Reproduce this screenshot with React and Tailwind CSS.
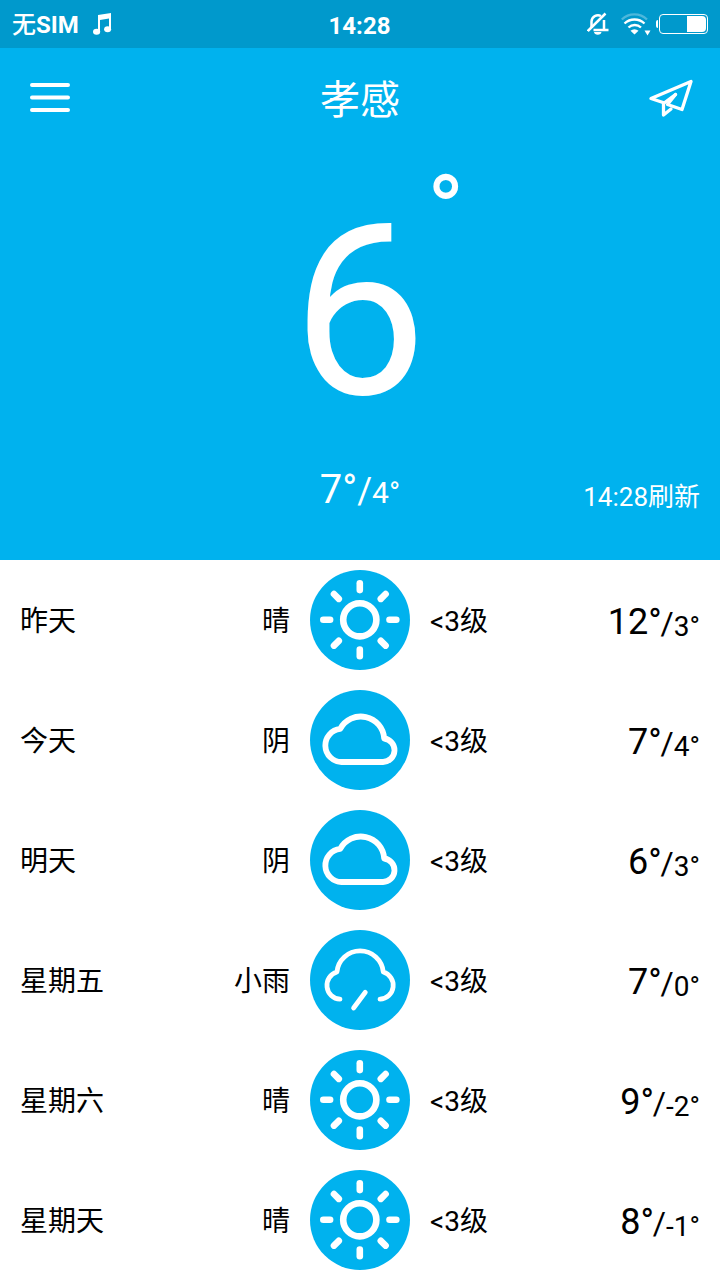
const forecast = [
  { day: "昨天", text: "晴", icon: "sun", wind: "<3级", high: 12, low: 3 },
  { day: "今天", text: "阴", icon: "cloud", wind: "<3级", high: 7, low: 4 },
  { day: "明天", text: "阴", icon: "cloud", wind: "<3级", high: 6, low: 3 },
  { day: "星期五", text: "小雨", icon: "rain", wind: "<3级", high: 7, low: 0 },
  { day: "星期六", text: "晴", icon: "sun", wind: "<3级", high: 9, low: -2 },
  { day: "星期天", text: "晴", icon: "sun", wind: "<3级", high: 8, low: -1 },
]

function WeatherIcon({ type }) {
  return (
    <svg viewBox="0 0 100 100" fill="none" stroke="#fff" strokeLinecap="round" className="w-[100px] h-[100px]">
      <circle cx="50" cy="50" r="50" fill="#00b2ee" stroke="none" />
      {type === "sun" && (
        <g strokeWidth="6.6">
          <circle cx="49.8" cy="49.8" r="16.6" />
          {[0, 45, 90, 135, 180, 225, 270, 315].map((a) => (
            <path key={a} d="M49.8 13.3v6.8" transform={`rotate(${a} 49.8 49.8)`} />
          ))}
        </g>
      )}
      {type === "cloud" && (
        <path
          strokeWidth="5.8"
          strokeLinejoin="round"
          d="M31.5 72A16.6 16.6 0 0 1 30.2 38.9A23.4 23.4 0 0 1 74.2 48.5A11.8 11.8 0 0 1 73 72Z"
        />
      )}
      {type === "rain" && (
        <g strokeWidth="4.8" strokeLinejoin="round">
          <path d="M30 69.2A13.9 13.9 0 0 1 26.9 42A23.3 23.3 0 0 1 73.3 42A13.9 13.9 0 0 1 70 69.2" />
          <path d="M55.3 62.3L43.6 78" />
        </g>
      )}
    </svg>
  )
}

function StatusBar() {
  return (
    <div className="relative h-12 bg-[#0099cc] flex items-center justify-between px-3">
      <div className="flex items-center gap-[13px]">
        <span className="text-2xl font-bold leading-[50px] pt-[2px]">
          <span className="font-medium">无</span>SIM
        </span>
        <svg viewBox="0 0 20 24" className="w-5 h-6" fill="#fff">
          <path d="M6 3L19 1V18H17V6.5L8 8V20H6Z" />
          <ellipse cx="4.6" cy="19.8" rx="3.6" ry="3" />
          <ellipse cx="15.6" cy="17.3" rx="3.5" ry="3" />
        </svg>
      </div>
      <span className="absolute left-0 right-px top-0 text-center text-2xl font-bold leading-[52px]">14:28</span>
      <div className="flex items-center">
        <svg viewBox="0 0 22 24" className="w-[22px] h-6" fill="none" stroke="#fff" strokeWidth="2.5">
          <path d="M4.5 16V9.5A6.5 6.5 0 0 1 14 4M17 8V18M6.5 18H21.5" />
          <path d="M0.8 19L18.5 1.5" />
          <path d="M7 20h7.5a3.8 3.2 0 0 1-7.5 0Z" fill="#fff" stroke="none" />
        </svg>
        <svg viewBox="0 0 32 24" className="w-8 h-6 ml-3" fill="none" stroke="#fff" strokeWidth="2.3">
          <path d="M0.8 7.5A18 18 0 0 1 26 7.5" opacity="0.3" />
          <path d="M3.5 11.5A14.5 14.5 0 0 1 23.5 11.5M7.5 15.5A9 9 0 0 1 20 15.5" />
          <path d="M9.5 18.8A6 6 0 0 1 17.5 18.8L13.5 22.5Z" fill="#fff" stroke="none" />
          <path d="M23.5 18.5h6l-3 5Z" fill="#fff" stroke="none" />
        </svg>
        <div className="ml-[3px] h-2 w-0.5 rounded-l bg-white" />
        <div className="ml-px w-[49px] h-5 rounded border border-white flex justify-end p-px">
          <div className="w-[19px] bg-white rounded-r-sm" />
        </div>
      </div>
    </div>
  )
}

function Header() {
  return (
    <div className="relative flex justify-between items-center h-[100px] pl-[30px] pr-[27px]">
      <svg viewBox="0 0 40 30" className="w-10 h-[30px]" stroke="#fff" strokeWidth="4" strokeLinecap="round">
        <path d="M2 2H38M2 14.6H38M2 27H38" />
      </svg>
      <h1 className="absolute inset-x-0 top-0 text-center text-[40px] leading-[106px]">孝感</h1>
      <svg viewBox="0 0 44 38" className="w-11 h-[38px]" fill="none" stroke="#fff" strokeWidth="3.3" strokeLinejoin="round" strokeLinecap="round">
        <path d="M14 23.5L2 19.5L42 2.5L33 30.5L20 26" />
        <path d="M26.5 15.5L14.5 24.5V36L22 30" />
        <path d="M26.5 15.5L18.5 25.5" />
      </svg>
    </div>
  )
}

function ForecastRow({ item }) {
  return (
    <div className="grid grid-cols-[1fr_100px_1fr] gap-x-5 items-center h-[120px] px-5 text-[28px]">
      <div className="flex justify-between pt-[3px]">
        <span>{item.day}</span>
        <span>{item.text}</span>
      </div>
      <WeatherIcon type={item.icon} />
      <div className="flex items-center justify-between">
        <span className="pt-[3px]">{item.wind}</span>
        <div className="flex items-baseline leading-[48px] pt-[7px]">
          <span className="text-[36px] -mr-px">{item.high}°</span>
          <span className="text-[32px]">/</span>
          <span className="relative top-0.5">{item.low}°</span>
        </div>
      </div>
    </div>
  )
}

export default function App() {
  return (
    <div className="w-[720px] h-[1280px] overflow-hidden bg-white text-black font-['Roboto','Noto_Sans_CJK_SC',sans-serif]">
      <div className="h-[560px] bg-[#00b2ee] text-white flex flex-col">
        <StatusBar />
        <Header />
        <div className="relative flex justify-center h-[312px] pr-px">
          <span className="text-[240px] leading-[328px]">6</span>
          <span className="absolute left-[427px] top-3 text-[100px] leading-[104px]">°</span>
        </div>
        <div className="relative flex justify-center items-baseline h-[52px] pt-1 leading-[52px]">
          <span className="text-[40px]">7°</span>
          <span className="text-[36px]">/</span>
          <span className="text-[30px]">4°</span>
          <span className="absolute right-5 top-[11px] text-[26px]">14:28刷新</span>
        </div>
      </div>
      {forecast.map((item) => (
        <ForecastRow key={item.day} item={item} />
      ))}
    </div>
  )
}
